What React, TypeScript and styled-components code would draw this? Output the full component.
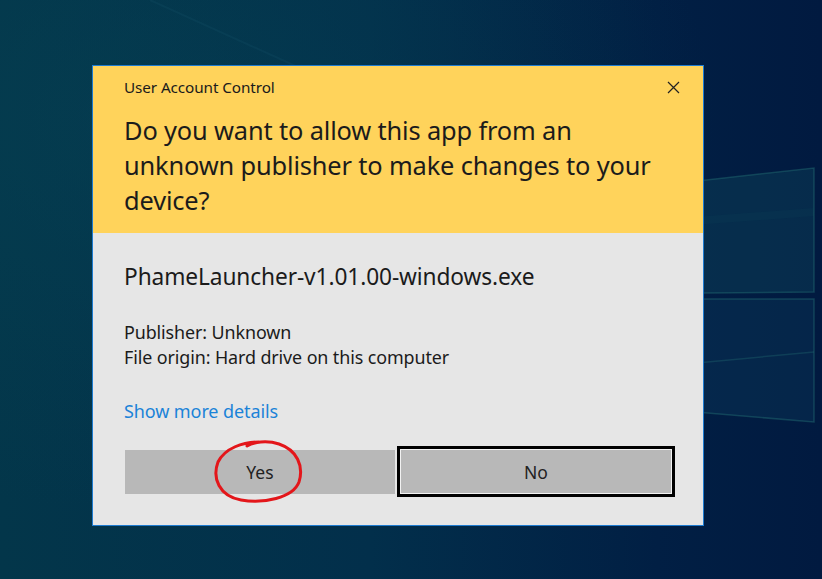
import React from 'react'
import styled, { createGlobalStyle } from 'styled-components'

const GlobalStyle = createGlobalStyle`
  html, body {
    margin: 0;
    padding: 0;
  }
  body {
    font-family: "Noto Sans", "Open Sans", sans-serif;
  }
`

const Desktop = styled.div`
  position: relative;
  width: 822px;
  height: 579px;
  overflow: hidden;
  box-sizing: border-box;
  padding: 65px 0 0 92px;
  background:
    radial-gradient(ellipse at 15% 20%, rgba(6, 66, 84, 0.5), transparent 60%),
    linear-gradient(90deg, #03364a 0%, #022f4b 45%, #011f44 80%, #011a40 100%);
`

const Wallpaper = styled.svg`
  position: absolute;
  inset: 0;
  pointer-events: none;
`

const Dialog = styled.div`
  position: relative;
  width: 612px;
  box-sizing: border-box;
  border: 1px solid #1e7bd0;
  display: flex;
  flex-direction: column;
`

const Header = styled.div`
  background: #ffd35b;
  height: 167px;
  box-sizing: border-box;
  padding: 12px 0 0 31px;
  color: #1b1b1b;
`

const TitleRow = styled.div`
  display: flex;
  align-items: center;
  justify-content: space-between;
  height: 18px;
  padding-right: 23px;
`

const Title = styled.span`
  font-size: 15.3px;
  letter-spacing: -0.1px;
`

const Close = styled.svg`
  display: block;
`

const Question = styled.h1`
  margin: 17px 0 0;
  font-size: 25.4px;
  font-weight: 400;
  line-height: 35px;
  letter-spacing: -0.15px;
  max-width: 545px;
`

const Body = styled.div`
  background: #e6e6e6;
  padding: 30px 28px 28px 31px;
  color: #1b1b1b;
`

const FileName = styled.div`
  font-size: 22.7px;
  line-height: 28px;
  letter-spacing: -0.1px;
`

const Details = styled.div`
  margin-top: 29px;
  font-size: 17.9px;
  line-height: 25px;
  letter-spacing: -0.1px;
`

const MoreLink = styled.a`
  display: block;
  margin-top: 29px;
  font-size: 18px;
  line-height: 24px;
  color: #1b83d8;
  text-decoration: none;
  letter-spacing: -0.1px;
`

const Buttons = styled.div`
  display: flex;
  align-items: center;
  gap: 2px;
  margin-top: 23px;
  padding-left: 1px;
`

const Button = styled.button<{ $focused?: boolean }>`
  position: relative;
  box-sizing: border-box;
  width: ${(p) => (p.$focused ? 278 : 270)}px;
  height: ${(p) => (p.$focused ? 51 : 44)}px;
  background: #b8b8b8;
  border: ${(p) => (p.$focused ? '3px solid #000' : 'none')};
  box-shadow: ${(p) => (p.$focused ? 'inset 0 0 0 1px #f2f2f2' : 'none')};
  font-family: "Noto Sans", "Open Sans", sans-serif;
  font-size: 17.5px;
  color: #222;
  padding: 0;
  cursor: pointer;
`

const Scribble = styled.svg`
  position: absolute;
  left: 88px;
  top: -10px;
  overflow: visible;
  pointer-events: none;
`

export default function App() {
  return (
    <>
      <GlobalStyle />
      <Desktop>
        <Wallpaper width="822" height="579" viewBox="0 0 822 579">
          <path d="M150 0 L300 68" stroke="rgba(40,110,130,0.12)" strokeWidth="2" />
          <polygon points="600,192 814,168 814,292 600,294" fill="rgba(18,80,100,0.32)" stroke="rgba(40,120,120,0.4)" strokeWidth="1.5" />
          <polygon points="600,299 814,299 814,422 600,404" fill="rgba(18,70,100,0.28)" stroke="rgba(40,120,120,0.4)" strokeWidth="1.5" />
          <path d="M600 372 L814 352" stroke="rgba(40,120,120,0.3)" strokeWidth="1.5" />
          <path d="M600 228 L814 212" stroke="rgba(40,120,120,0.06)" strokeWidth="8" />
        </Wallpaper>
        <Dialog>
          <Header>
            <TitleRow>
              <Title>User Account Control</Title>
              <Close width="13" height="13" viewBox="0 0 13 13">
                <path d="M1 1 L12 12 M12 1 L1 12" stroke="#222" strokeWidth="1.2" />
              </Close>
            </TitleRow>
            <Question>Do you want to allow this app from an unknown publisher to make changes to your device?</Question>
          </Header>
          <Body>
            <FileName>PhameLauncher-v1.01.00-windows.exe</FileName>
            <Details>
              Publisher: Unknown
              <br />
              File origin: Hard drive on this computer
            </Details>
            <MoreLink href="#">Show more details</MoreLink>
            <Buttons>
              <Button>
                Yes
                <Scribble width="90" height="64" viewBox="0 0 90 64">
                  <path
                    d="M46 2 C30 2 12 8 5 22 C-1 38 6 56 28 60 C50 64 80 58 86 42 C91 26 84 10 66 4 C54 0 40 2 34 6"
                    fill="none"
                    stroke="#e3161a"
                    strokeWidth="3"
                    strokeLinecap="round"
                  />
                </Scribble>
              </Button>
              <Button $focused>No</Button>
            </Buttons>
          </Body>
        </Dialog>
      </Desktop>
    </>
  )
}
